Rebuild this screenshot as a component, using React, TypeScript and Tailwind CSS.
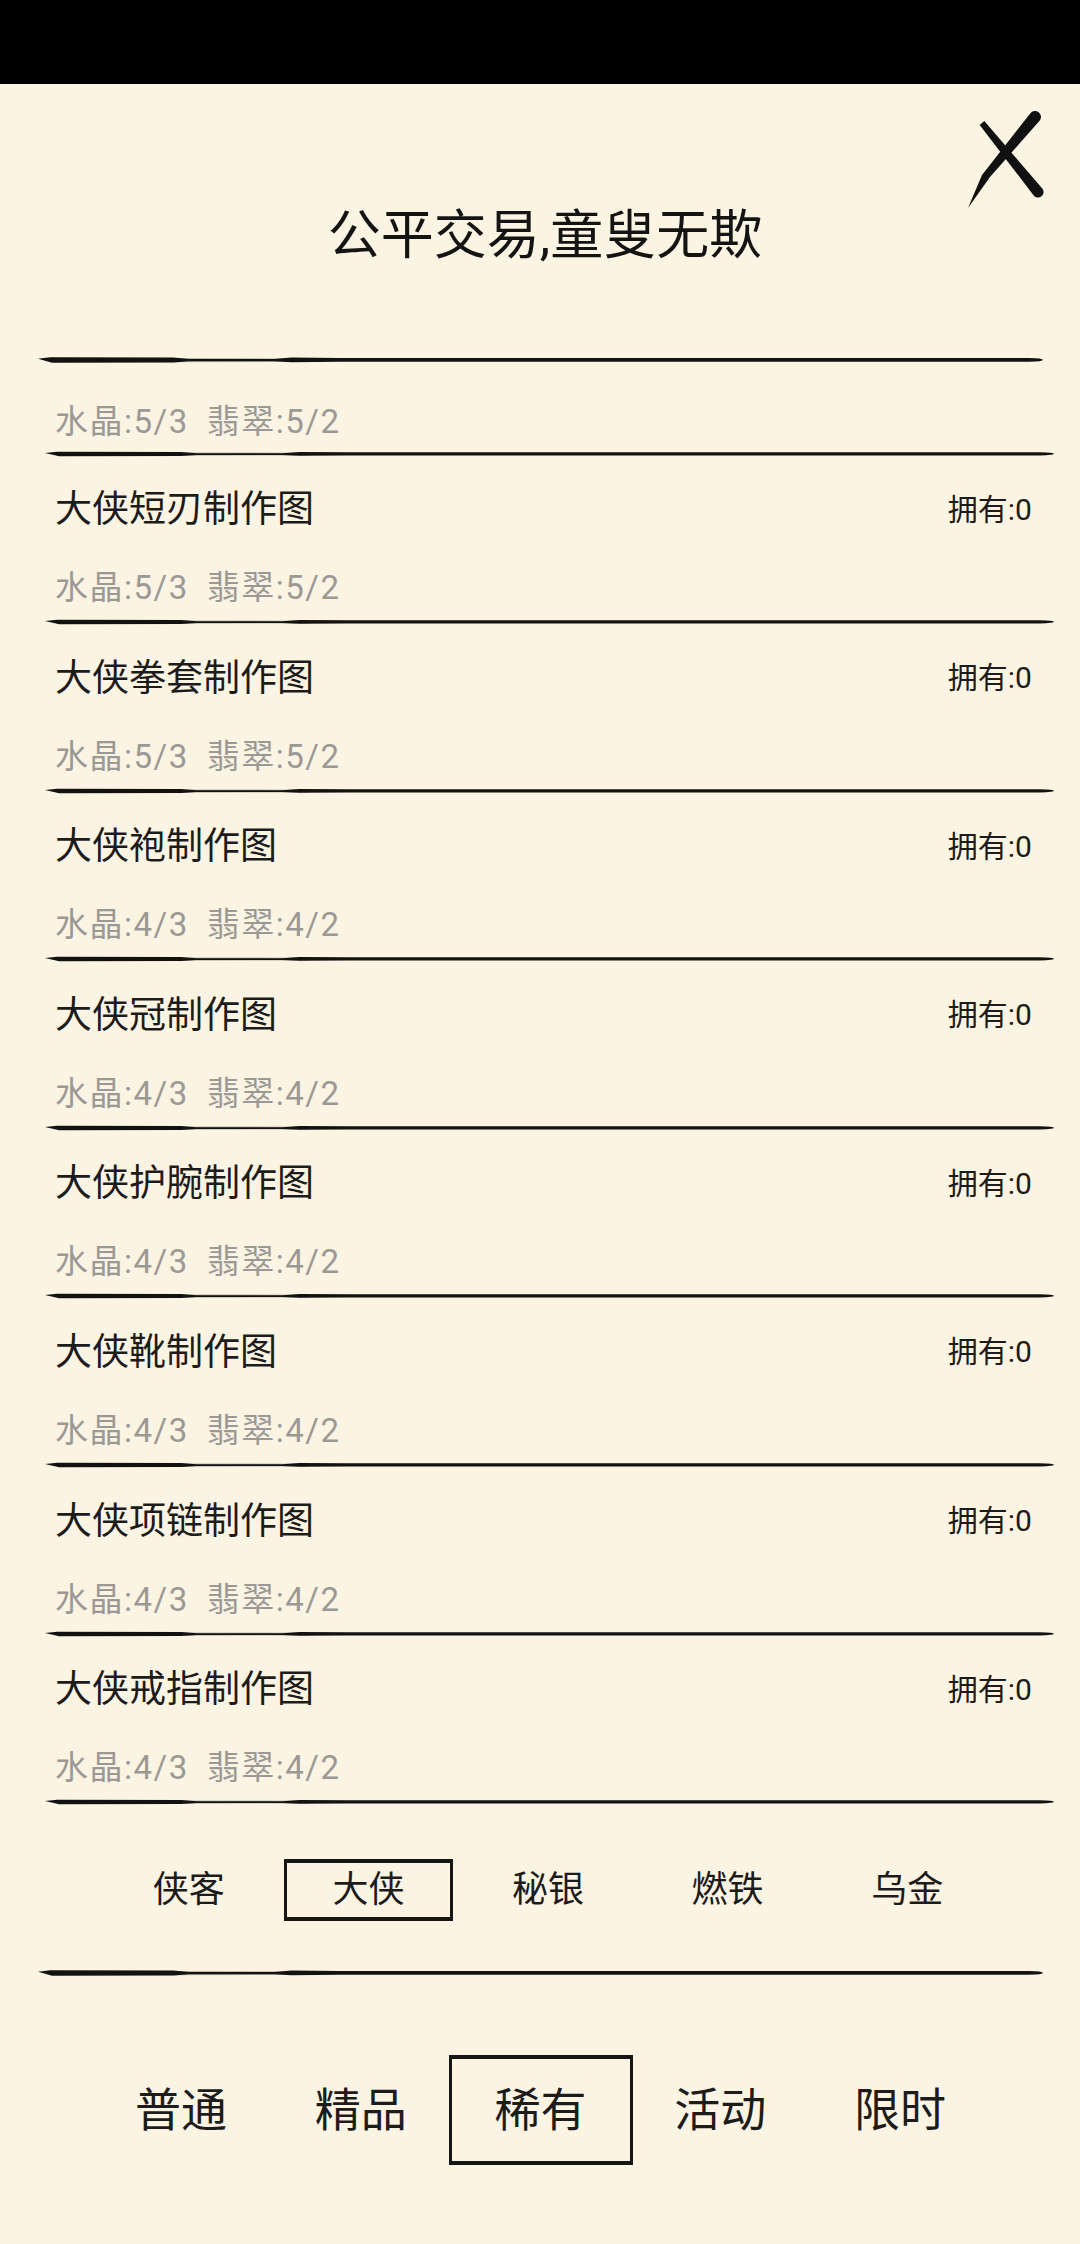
import React from "react";

const FONT = "font-['Roboto','Noto_Sans_CJK_SC',sans-serif]";

type Recipe = {
  name: string;
  crystal: string;
  jade: string;
};

const recipes: Recipe[] = [
  { name: "大侠短刃制作图", crystal: "5/3", jade: "5/2" },
  { name: "大侠拳套制作图", crystal: "5/3", jade: "5/2" },
  { name: "大侠袍制作图", crystal: "4/3", jade: "4/2" },
  { name: "大侠冠制作图", crystal: "4/3", jade: "4/2" },
  { name: "大侠护腕制作图", crystal: "4/3", jade: "4/2" },
  { name: "大侠靴制作图", crystal: "4/3", jade: "4/2" },
  { name: "大侠项链制作图", crystal: "4/3", jade: "4/2" },
  { name: "大侠戒指制作图", crystal: "4/3", jade: "4/2" },
];

const grades = ["侠客", "大侠", "秘银", "燃铁", "乌金"];
const kinds = ["普通", "精品", "稀有", "活动", "限时"];

// ink brush line
const Brush = ({ className }: { className: string }) => (
  <svg viewBox="0 0 1000 10" preserveAspectRatio="none" className={className}>
    <path
      d="M130 3 L260 3.4 L260 6.8 L130 7.2 Z"
      fill="#1a1a1a"
      opacity="0.3"
    />
    <path
      d="M0 3.8 L12 2.2 L135 2.5 L150 4 L235 4 L252 2.4 L300 2.9 L986 2.9 Q1000 3.1 1000 4.8 Q1000 6.6 986 6.8 L300 6.8 L252 7.3 L235 6.2 L150 6.2 L135 7.5 L14 7.8 Z"
      fill="#121212"
    />
  </svg>
);

const CloseMark = () => (
  <svg viewBox="0 0 90 110" className="h-[110px] w-[90px]">
    <path d="M19.7 19.9 L24.3 16.1 L82.3 83.5 A5.5 5.5 0 0 1 73.7 90.5 Z" fill="#111" />
    <path d="M70.2 8.4 A6 6 0 0 1 79.8 15.6 L30 72 L8 103 L22 70 Z" fill="#111" />
  </svg>
);

const Cost = ({ item }: { item: Recipe }) => (
  <div className="flex h-[52px] items-center pl-[55px] text-[33px] leading-none tracking-[1.5px] text-[#9b9996]">
    <span>水晶:{item.crystal}</span>
    <span className="ml-[18px]">翡翠:{item.jade}</span>
  </div>
);

const RecipeRow = ({ item }: { item: Recipe }) => (
  <div className="flex h-[168.6px] flex-col">
    <div className="flex h-[160.6px] flex-col">
      <div className="flex h-[104px] items-center justify-between pl-[55px] pr-[48px]">
        <span className="text-[37px] leading-none text-[#1c1c1c]">{item.name}</span>
        <span className="text-[30px] leading-none text-[#1c1c1c]">拥有:0</span>
      </div>
      <Cost item={item} />
    </div>
    <Brush className="ml-[45px] h-[8px] w-[1009px]" />
  </div>
);

const TabRow = ({
  items,
  active,
  boxClass,
  textClass,
}: {
  items: string[];
  active: number;
  boxClass: string;
  textClass: string;
}) => (
  <div className="grid grid-cols-5">
    {items.map((t, i) => (
      <div key={t} className="flex justify-center">
        <div
          className={`flex shrink-0 items-center justify-center ${boxClass} ${
            i === active
              ? "border-[3px] border-t-[4px] border-b-[4px] border-[#161616]"
              : "border-[3px] border-transparent"
          }`}
        >
          <span className={`${textClass} leading-none text-[#1c1c1c]`}>{t}</span>
        </div>
      </div>
    ))}
  </div>
);

export default function App() {
  return (
    <div className={`h-[2244px] w-[1080px] overflow-hidden bg-[#fcf4e3] ${FONT}`}>
      <div className="h-[84px] bg-black" />

      <div className="relative h-[271px]">
        <div className="flex justify-center pl-[10px] pt-[126px]">
          <h1 className="text-[53px] font-normal leading-none text-[#141414]">公平交易,童叟无欺</h1>
        </div>
        <button className="absolute left-[960px] top-[21px]">
          <CloseMark />
        </button>
      </div>

      <Brush className="ml-[38px] h-[10px] w-[1005px]" />

      {/* list, scrolled: only the cost line of the first item shows */}
      <div className="flex h-[92.5px] flex-col">
        <div className="h-[84.5px] pt-[30.5px]">
          <Cost item={{ name: "", crystal: "5/3", jade: "5/2" }} />
        </div>
        <Brush className="ml-[45px] h-[8px] w-[1009px]" />
      </div>
      {recipes.map((r) => (
        <RecipeRow key={r.name} item={r} />
      ))}

      <div className="h-[161.7px] pt-[52.7px]">
        <div className="ml-[99px] w-[898px]">
          <TabRow
            items={grades}
            active={1}
            boxClass="h-[62px] w-[169px]"
            textClass="text-[36px]"
          />
        </div>
      </div>

      <Brush className="ml-[38px] h-[10px] w-[1005px]" />

      <div className="pt-[77px]">
        <div className="ml-[91px] w-[899px]">
          <TabRow
            items={kinds}
            active={2}
            boxClass="h-[110px] w-[184px]"
            textClass="text-[46px]"
          />
        </div>
      </div>
    </div>
  );
}
